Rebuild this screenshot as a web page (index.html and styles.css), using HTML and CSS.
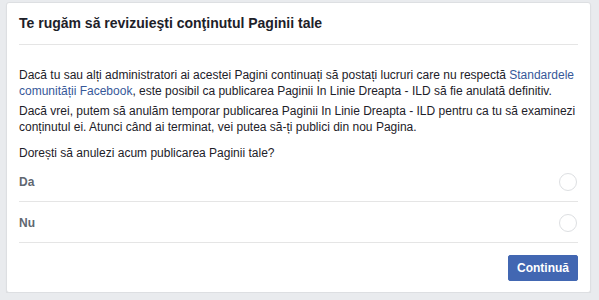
FILE: index.html
```html
<!DOCTYPE html>
<html lang="ro">
<head>
  <meta charset="UTF-8">
  <meta name="viewport" content="width=device-width, initial-scale=1">
  <title>Revizuieşte Pagina</title>
  <link rel="stylesheet" href="styles.css">
</head>
<body>
  <div class="dialog">
    <!-- Header -->
    <div class="dialog-header">
      <h2>Te rugăm să revizuieşti conţinutul Paginii tale</h2>
    </div>

    <!-- Body -->
    <div class="dialog-body">
      <p>Dacă tu sau alți administratori ai acestei Pagini continuați să postați lucruri care nu respectă <a href="#">Standardele comunității Facebook</a>, este posibil ca publicarea Paginii In Linie Dreapta - ILD să fie anulată definitiv.</p>
      <p>Dacă vrei, putem să anulăm temporar publicarea Paginii In Linie Dreapta - ILD pentru ca tu să examinezi conținutul ei. Atunci când ai terminat, vei putea să-ți publici din nou Pagina.</p>
      <p class="question">Dorești să anulezi acum publicarea Paginii tale?</p>

      <label class="option">
        <span>Da</span>
        <input type="radio" name="unpublish" value="yes">
        <span class="radio"></span>
      </label>
      <label class="option">
        <span>Nu</span>
        <input type="radio" name="unpublish" value="no">
        <span class="radio"></span>
      </label>
    </div>

    <!-- Footer -->
    <div class="dialog-footer">
      <button class="btn-primary">Continuă</button>
    </div>
  </div>
</body>
</html>
```

FILE: styles.css
```css
/* Reset and base */
* {
  margin: 0;
  padding: 0;
  box-sizing: border-box;
}
body {
  font-family: "Liberation Sans", Arial, sans-serif;
  font-size: 12px;
  color: #1d2129;
  background: #e9ebee;
  padding: 2px 8px 0 6px;
}
.dialog {
  background: #fff;
  border: 1px solid #dddfe2;
  border-radius: 3px;
  box-shadow: 0 1px 1px rgba(0,0,0,0.08);
}
/* Header */
.dialog-header {
  margin: 0 12px;
  padding: 11px 0;
  border-bottom: 1px solid #e5e5e5;
}
.dialog-header h2 {
  font-size: 14px;
  line-height: 19px;
  font-weight: bold;
  color: #1d2129;
}
/* Body */
.dialog-body {
  padding: 22px 12px 0;
}
.dialog-body p {
  line-height: 16px;
  margin-bottom: 4px;
}
.dialog-body p.question {
  margin-top: 10px;
  margin-bottom: 0;
}
.dialog-body a {
  color: #365899;
  text-decoration: none;
}
/* Radio options */
.option {
  display: flex;
  align-items: center;
  justify-content: space-between;
  height: 41px;
  padding-top: 1px;
  border-bottom: 1px solid #e5e5e5;
  font-weight: bold;
  color: #606770;
  cursor: pointer;
}
.option input {
  display: none;
}
.option .radio {
  width: 18px;
  height: 18px;
  border: 1px solid #dddfe2;
  border-radius: 50%;
  margin-right: 1px;
}
/* Footer */
.dialog-footer {
  display: flex;
  justify-content: flex-end;
  padding: 12px 12px 11px;
}
.btn-primary {
  font-family: inherit;
  font-size: 12px;
  font-weight: bold;
  line-height: 24px;
  padding: 0 8px;
  color: #fff;
  background: #4267b2;
  border: 1px solid #4267b2;
  border-radius: 2px;
  cursor: pointer;
}
```
